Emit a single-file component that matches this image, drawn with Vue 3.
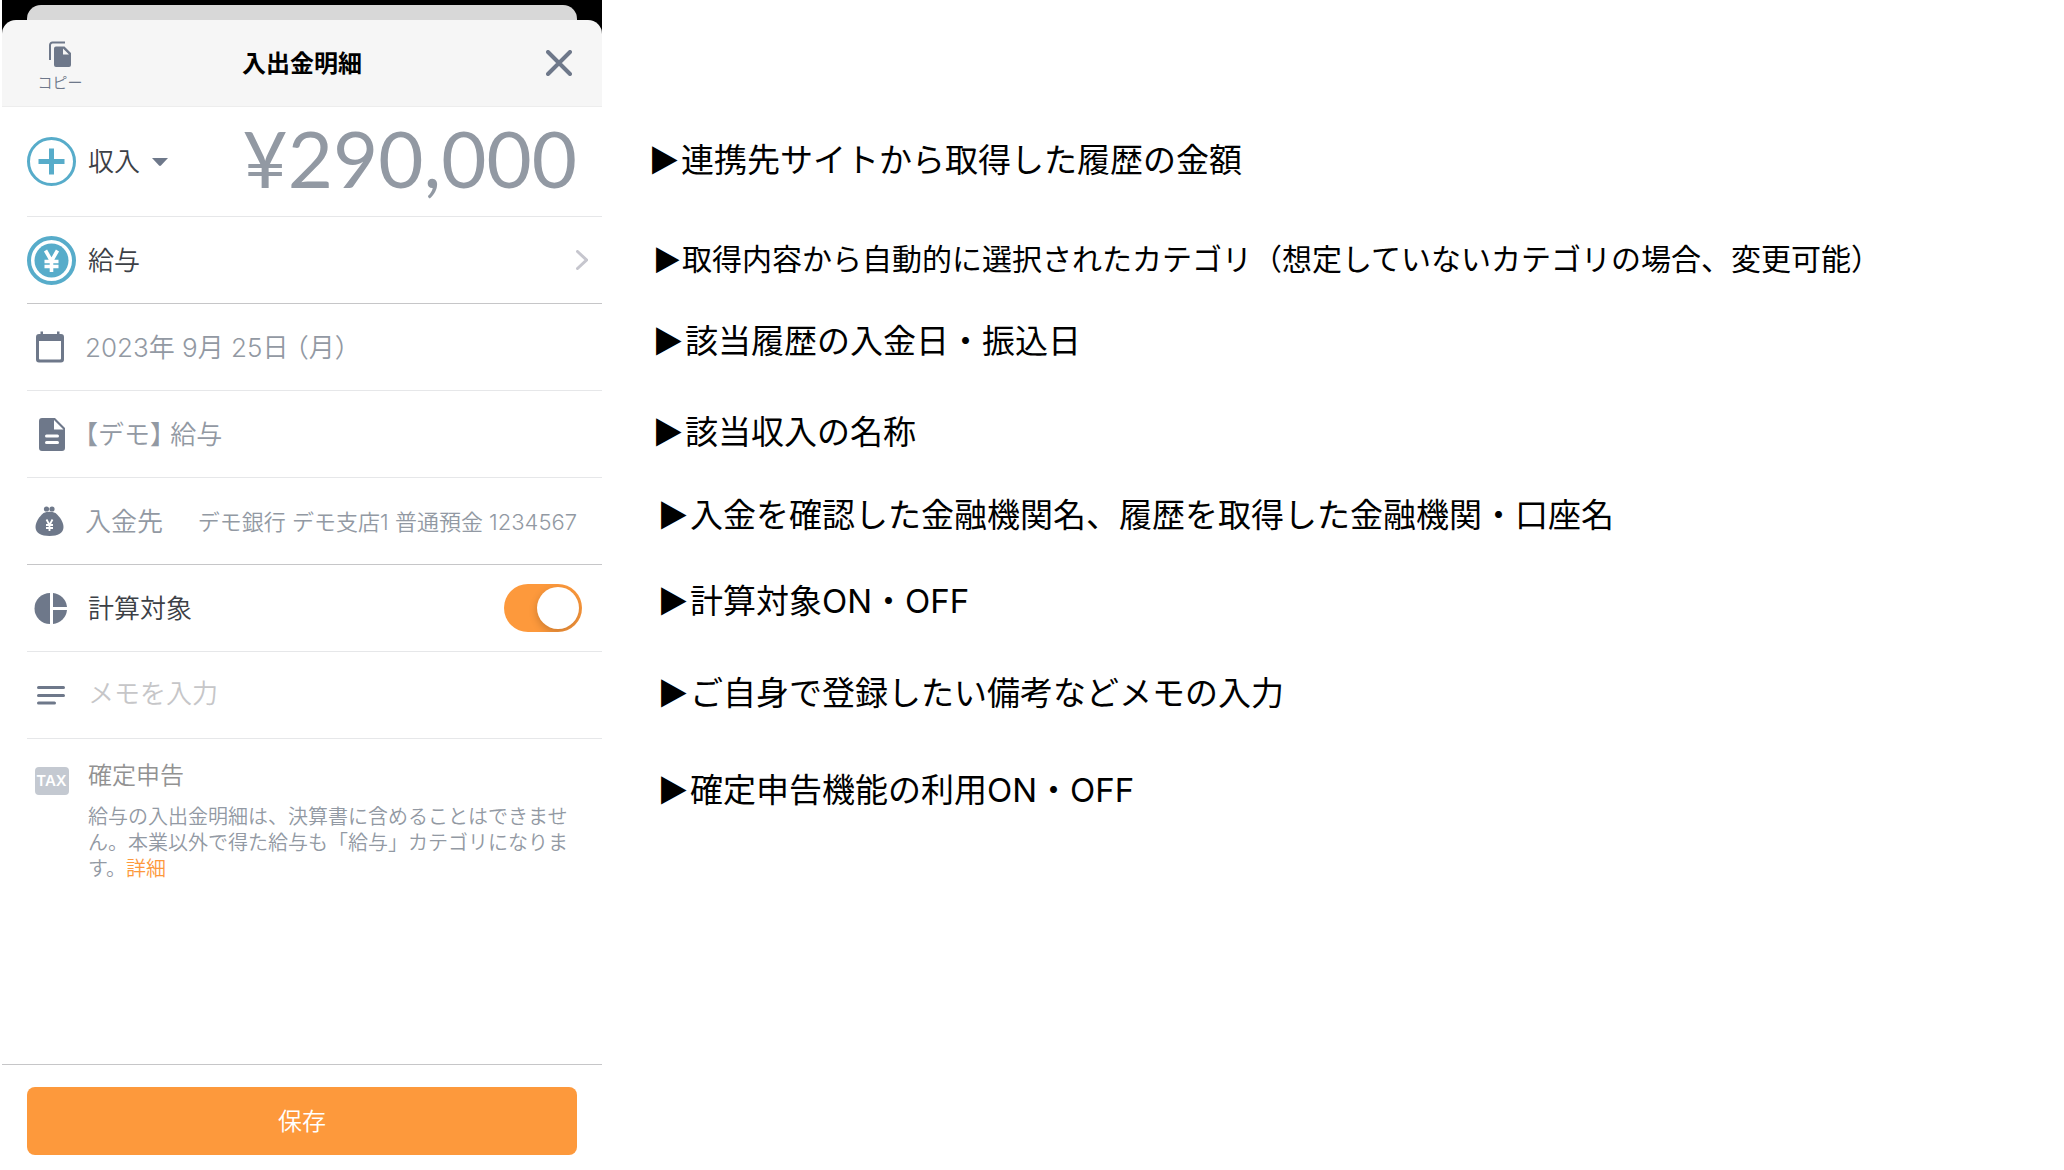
<template>
  <main class="page">
    <section class="phone">
      <div class="backdrop">
        <div class="back-card"></div>
        <header class="sheet-header">
          <button class="copy-btn" type="button">
            <svg class="copy-icon" viewBox="0 0 24 27" aria-hidden="true">
              <path d="M2 19V4a2.500 2.500 0 0 1 2.500-2.500H17" fill="none" stroke="currentColor" stroke-width="2" />
              <path
                fill-rule="evenodd"
                d="M8 5.500h8.500L23 12v12a2 2 0 0 1-2 2H8a2 2 0 0 1-2-2V7.500a2 2 0 0 1 2-2zM15 7.500V13.500h6z"
                fill="currentColor"
              />
            </svg>
            <span>コピー</span>
          </button>
          <h1 class="sheet-title">入出金明細</h1>
          <button class="close-btn" type="button" aria-label="閉じる">
            <svg viewBox="0 0 26 26" aria-hidden="true">
              <path d="M2 2l22 22M24 2L2 24" fill="none" stroke="currentColor" stroke-width="4" stroke-linecap="round" />
            </svg>
          </button>
        </header>
      </div>

      <div class="rows">
        <div class="row amount-row">
          <svg class="icon round" viewBox="0 0 49 49" aria-hidden="true">
            <circle cx="24.500" cy="24.500" r="23" fill="none" stroke="currentColor" stroke-width="3" />
            <path d="M24.500 11.500v26M11.500 24.500h26" stroke="currentColor" stroke-width="5" />
          </svg>
          <div class="kind">
            <select v-model="kind" aria-label="収支区分">
              <option>収入</option>
              <option>支出</option>
            </select>
            <svg class="caret" viewBox="0 0 16 8" aria-hidden="true">
              <path d="M0 0h16l-7 7.500q-1 .8-2 0z" fill="currentColor" />
            </svg>
          </div>
          <output class="amount">¥290,000</output>
        </div>

        <button class="row category-row strong" type="button">
          <svg class="icon round" viewBox="0 0 49 49" aria-hidden="true">
            <circle cx="24.500" cy="24.500" r="22.500" fill="none" stroke="currentColor" stroke-width="4" />
            <circle cx="24.500" cy="24.500" r="17" fill="currentColor" />
            <path
              d="M18.500 14.500l6 10.500 6-10.500M24.500 24.500v11.500M17.500 25.500h14M17.500 30.500h14"
              fill="none"
              stroke="#fff"
              stroke-width="3.600"
            />
          </svg>
          <span class="label">給与</span>
          <svg class="chevron" viewBox="0 0 12 20" aria-hidden="true">
            <path d="M1.500 1.500L10.500 10l-9 8.500" fill="none" stroke="currentColor" stroke-width="3" stroke-linecap="round" />
          </svg>
        </button>

        <div class="row locked">
          <svg class="icon" viewBox="0 0 49 49" aria-hidden="true">
            <path
              fill-rule="evenodd"
              d="M13.500 8.500h2.500V11h14V8.500h2.500V11H34a3 3 0 0 1 3 3v22.500a3 3 0 0 1-3 3H12a3 3 0 0 1-3-3V14a3 3 0 0 1 3-3h1.500zM12 18v17.500a1 1 0 0 0 1 1h20a1 1 0 0 0 1-1V18z"
              fill="currentColor"
            />
          </svg>
          <span class="label">2023年 9月 25日 （月）</span>
        </div>

        <div class="row locked">
          <svg class="icon" viewBox="0 0 49 49" aria-hidden="true">
            <path
              fill-rule="evenodd"
              d="M15 8h13l10 10v20a3 3 0 0 1-3 3H15a3 3 0 0 1-3-3V11a3 3 0 0 1 3-3zM27 10v9.500h9.500zM19.500 24.500a1.500 1.500 0 0 0 0 3h11a1.500 1.500 0 0 0 0-3zM19.500 31a1.500 1.500 0 0 0 0 3h11a1.500 1.500 0 0 0 0-3z"
              fill="currentColor"
            />
          </svg>
          <span class="label">【デモ】 給与</span>
        </div>

        <div class="row locked strong">
          <svg class="icon" viewBox="0 0 49 49" aria-hidden="true">
            <circle cx="19.500" cy="12" r="2.600" fill="currentColor" />
            <circle cx="25" cy="12" r="2.600" fill="currentColor" />
            <path
              d="M16.500 16Q22.500 13.500 28.500 16C32 19 36.500 24.500 36.500 30C36.500 36 31 39 22.500 39S8.500 36 8.500 30C8.500 24.500 13 19 16.500 16z"
              fill="currentColor"
            />
            <path d="M19.500 22.500l3 5.500 3-5.500M22.500 27.500v6.500M19 28h7M19 31h7" fill="none" stroke="#fff" stroke-width="1.800" />
          </svg>
          <span class="label">入金先</span>
          <span class="account">デモ銀行 デモ支店1 普通預金 1234567</span>
        </div>

        <label class="row">
          <svg class="icon" viewBox="0 0 49 49" aria-hidden="true">
            <path d="M23 9v31A15.500 15.500 0 0 1 23 9z" fill="currentColor" />
            <path d="M26 9a15.500 15.500 0 0 1 14 14H26z" fill="currentColor" />
            <path d="M26 26h14a15.500 15.500 0 0 1-14 14z" fill="currentColor" />
          </svg>
          <span class="label">計算対象</span>
          <input v-model="counted" class="toggle" type="checkbox" role="switch" />
        </label>

        <label class="row">
          <svg class="icon" viewBox="0 0 49 49" aria-hidden="true">
            <path
              d="M11.500 16.500h25M11.500 24.500h25M11.500 32h16"
              stroke="currentColor"
              stroke-width="3"
              stroke-linecap="round"
            />
          </svg>
          <input v-model="memo" class="memo" type="text" placeholder="メモを入力" aria-label="メモ" />
        </label>

        <div class="tax-row">
          <span class="tax-cell"><span class="tax-badge">TAX</span></span>
          <div class="tax-body">
            <h2>確定申告</h2>
            <p>
              給与の入出金明細は、決算書に含めることはできません。本業以外で得た給与も「給与」カテゴリになります。<a href="#detail">詳細</a>
            </p>
          </div>
        </div>
      </div>

      <footer class="sheet-footer">
        <button class="save-btn" type="button">保存</button>
      </footer>
    </section>

    <ul class="notes">
      <li v-for="note in notes" :key="note.text" :class="note.style">
        <span class="marker">▶</span>
        <span>{{ note.text }}</span>
      </li>
    </ul>
  </main>
</template>

<script setup>
import { ref } from 'vue'

const kind = ref('収入')
const counted = ref(true)
const memo = ref('')

const notes = [
  { text: '連携先サイトから取得した履歴の金額', style: '' },
  { text: '取得内容から自動的に選択されたカテゴリ（想定していないカテゴリの場合、変更可能）', style: 'small' },
  { text: '該当履歴の入金日・振込日', style: 'mid' },
  { text: '該当収入の名称', style: 'mid' },
  { text: '入金を確認した金融機関名、履歴を取得した金融機関・口座名', style: 'deep' },
  { text: '計算対象ON・OFF', style: 'deep' },
  { text: 'ご自身で登録したい備考などメモの入力', style: 'deep' },
  { text: '確定申告機能の利用ON・OFF', style: 'deep' }
]
</script>

<style>
body {
  background: #fff;
}
</style>

<style scoped>
.page {
  display: grid;
  grid-template-columns: 7fr 17fr;
  min-height: 100vh;
  font-family: Inter, "Noto Sans CJK JP", sans-serif;
  color: #3c4046;
}

button,
select,
input {
  font: inherit;
  color: inherit;
}

button {
  padding: 0;
  border: none;
  background: none;
  cursor: pointer;
}

.phone {
  display: flex;
  flex-direction: column;
  margin-left: 2px;
  font-weight: 350;
}

.backdrop {
  padding-top: 5px;
  background: #000;
}

/* the sheet underneath, peeking out behind the open one */
.back-card {
  height: 30px;
  margin: 0 25px -15px;
  border-radius: 14px 14px 0 0;
  background: #d8d8d8;
}

.sheet-header {
  position: relative;
  display: grid;
  grid-template-columns: 1fr auto 1fr;
  align-items: center;
  height: 86px;
  padding: 0 25px;
  border-bottom: 1px solid #ededed;
  border-radius: 14px 14px 0 0;
  background: #f6f6f6;
  color: #6e788a;
}

.copy-btn {
  display: flex;
  flex-direction: column;
  align-items: center;
  gap: 5px;
  justify-self: start;
  width: 66px;
  padding-top: 8px;
  font-size: 15px;
  line-height: 20px;
}

.copy-icon {
  width: 24px;
  height: 27px;
}

.sheet-title {
  margin: 0;
  padding-bottom: 3px;
  font-size: 24px;
  font-weight: 700;
  color: #000;
}

.close-btn {
  justify-self: end;
  width: 26px;
  height: 26px;
  margin-right: 5px;
}

.close-btn svg {
  display: block;
}

.rows {
  flex: 1;
  margin-left: 25px;
}

.row {
  display: flex;
  align-items: center;
  gap: 12px;
  box-sizing: border-box;
  width: 100%;
  height: 87px;
  padding-right: 25px;
  border-bottom: 1px solid #e6e7e9;
  font-size: 26px;
  text-align: left;
}

.row.strong {
  border-bottom-color: #c6c6c8;
}

.row.locked {
  gap: 9px;
  color: #9299a3;
  font-feature-settings: "halt";
}

.row.amount-row {
  height: 110px;
}

.icon {
  flex: none;
  width: 49px;
  height: 49px;
  color: #6e788a;
}

.icon.round {
  color: #57acca;
}

.label {
  padding-bottom: 3px;
  white-space: nowrap;
}

.kind {
  display: flex;
  align-items: center;
  gap: 12px;
}

.kind select {
  width: 52px;
  padding: 0;
  border: none;
  background: none;
  appearance: none;
}

.caret {
  width: 16px;
  height: 8px;
  color: #6e788a;
}

.amount {
  flex: 1;
  padding-bottom: 7px;
  font-family: Lato, sans-serif;
  font-size: 78px;
  font-weight: 400;
  text-align: right;
  color: #9299a3;
}

.row.category-row {
  padding-right: 14px;
}

.chevron {
  width: 12px;
  height: 20px;
  margin-left: auto;
  color: #c6c6ce;
}

.account {
  flex: 1;
  padding-bottom: 3px;
  font-size: 22px;
  text-align: right;
  white-space: nowrap;
}

.toggle {
  position: relative;
  width: 78px;
  height: 48px;
  margin: 0 -5px 0 auto;
  overflow: hidden;
  border-radius: 24px;
  background: #c6c6c8;
  appearance: none;
  cursor: pointer;
}

.toggle::before {
  content: "";
  position: absolute;
  top: 3px;
  left: 3px;
  width: 42px;
  height: 42px;
  border-radius: 50%;
  background: #fff;
  box-shadow: 0 3px 8px rgba(0, 0, 0, 0.2);
  transition: left 0.2s;
}

.toggle:checked {
  background: #fd993c;
}

.toggle:checked::before {
  left: 33px;
}

.memo {
  flex: 1;
  min-width: 0;
  padding: 0 0 3px;
  border: none;
  outline: none;
  background: none;
}

.memo::placeholder {
  color: #c6c6c8;
  opacity: 1;
}

.tax-row {
  display: flex;
  gap: 12px;
  padding: 20px 25px 20px 0;
}

.tax-cell {
  display: flex;
  flex: none;
  justify-content: center;
  width: 49px;
  padding-top: 8px;
}

.tax-badge {
  width: 34px;
  height: 28px;
  border-radius: 4px;
  background: #c4c9d1;
  color: #fff;
  font-size: 15px;
  font-weight: 600;
  line-height: 28px;
  text-align: center;
}

.tax-body h2 {
  margin: 0 0 11px;
  font-size: 24px;
  font-weight: 350;
  line-height: 34px;
  color: #929292;
}

.tax-body p {
  margin: 0;
  font-size: 20px;
  line-height: 26px;
  color: #9299a3;
}

.tax-body a {
  color: #fd993c;
  text-decoration: none;
}

.sheet-footer {
  padding: 22px 25px 15px;
  border-top: 1px solid #c6c6c8;
}

.save-btn {
  width: 100%;
  height: 68px;
  padding-bottom: 3px;
  border-radius: 8px;
  background: #fd993c;
  color: #fff;
  font-size: 24px;
}

.notes {
  display: grid;
  grid-template-rows: 106px 92px 72px 110px 56px 116px 68px 126px;
  align-content: start;
  align-items: center;
  margin: 0;
  padding: 105px 20px 0 50px;
  color: #000;
  font-size: 33px;
  list-style: none;
}

.notes li {
  display: flex;
  align-items: center;
  white-space: nowrap;
}

.notes .small {
  padding-left: 4px;
  font-size: 30px;
}

.notes .mid {
  padding-left: 4px;
}

.notes .deep {
  padding-left: 9px;
}

.marker {
  width: 29px;
  font-family: "DejaVu Sans Condensed", "DejaVu Sans", sans-serif;
  font-size: 37px;
  line-height: 40px;
}

.small .marker {
  width: 26px;
  font-size: 34px;
}
</style>
